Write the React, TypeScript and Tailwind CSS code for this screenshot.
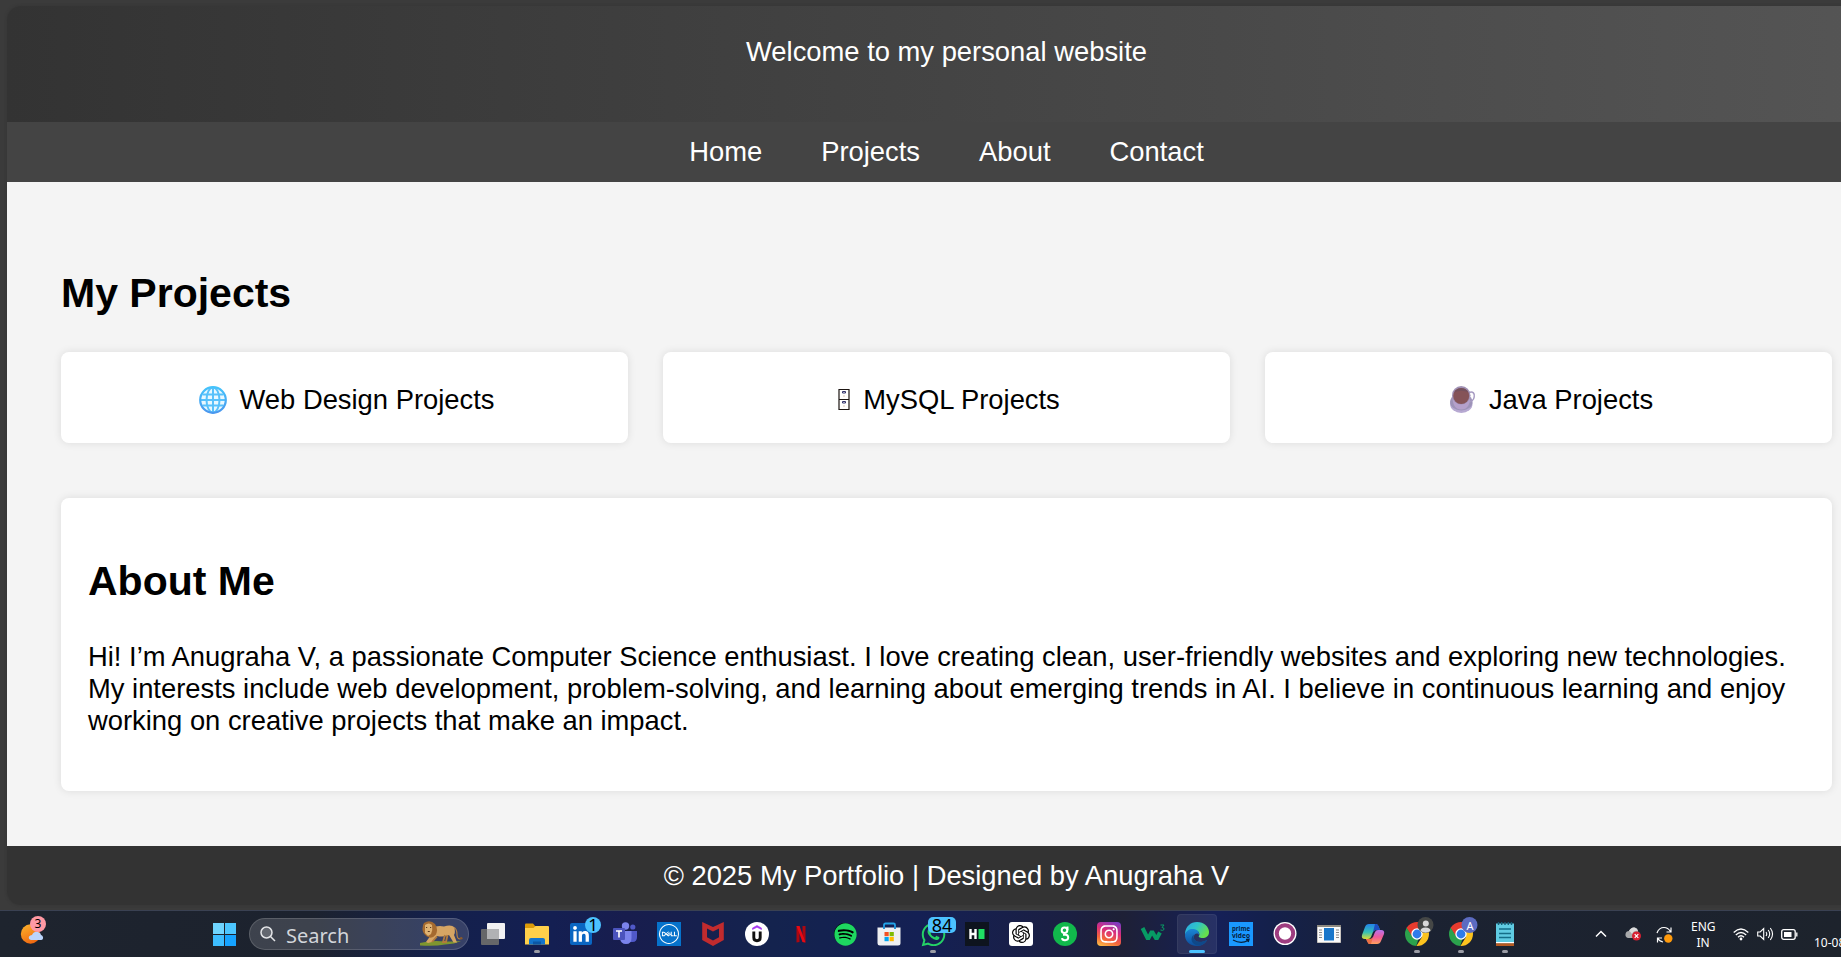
import type { ReactNode } from "react";
import { FaLinkedinIn, FaSpotify, FaWhatsapp, FaInstagram } from "react-icons/fa6";
import { SiDell, SiOpenai } from "react-icons/si";

function Globe() {
  return (
    <svg viewBox="0 0 28 28" className="h-7 w-7" fill="none">
      <defs>
        <linearGradient id="globe" x1="0" y1="0" x2="0" y2="1">
          <stop offset="0" stopColor="#45c3fb" />
          <stop offset="1" stopColor="#4a97ee" />
        </linearGradient>
      </defs>
      <circle cx="14" cy="14" r="13" fill="#e9f8ff" />
      <g stroke="#58c1fb" strokeWidth="2">
        <ellipse cx="14" cy="14" rx="6.500" ry="12.500" />
        <path d="M14 1.500v25M1.500 14h25M3.500 8.500h21M3.500 19.500h21" />
      </g>
      <circle cx="14" cy="14" r="12.800" stroke="url(#globe)" strokeWidth="2.200" />
    </svg>
  );
}

function Cabinet() {
  return (
    <svg viewBox="0 0 12 21" className="h-[21px] w-3" fill="none">
      <path d="M1 .5h10v20H1zM1 10.500h10" stroke="#1c1512" strokeWidth="1.200" />
      <path d="M4.500 2.500v1.500h3V2.500zM4.500 12.500V14h3v-1.500z" stroke="#33356d" />
      <path d="M5.500 7h1M5.500 17h1" stroke="#b98d6b" />
    </svg>
  );
}

function Cup() {
  return (
    <svg viewBox="0 0 26 27" className="h-[27px] w-[26px]" fill="none">
      <ellipse cx="11.300" cy="18" rx="11.200" ry="9" fill="#b7a9d2" />
      <ellipse cx="11.300" cy="16" rx="11.200" ry="8.500" fill="#9d93b8" />
      <path d="M19 6.500c4-1.500 6 1 5.200 4.500-.5 3-2.500 4.500-5.500 5" stroke="#a79bc2" strokeWidth="1.500" />
      <path d="M2.300 9c0 10 3 14.500 9 14.500s9-4.500 9-14.500z" fill="#b5a0cb" />
      <circle cx="11.200" cy="9.300" r="9.200" fill="#a091b4" />
      <circle cx="11.200" cy="10" r="8" fill="#855358" />
      <path d="M4 6.500a8.200 8.200 0 0 1 14.500 0q-7.200-3.500-14.500 0" fill="#74505c" />
    </svg>
  );
}

function Lion() {
  return (
    <svg viewBox="0 0 44 26" className="h-[26px] w-11" fill="none">
      <path d="M1 22q12-3 25-1.500 10 0 16-.5-6 3-16 3.500-10 2-25 1z" fill="#7f962f" />
      <path d="M34 6q4 1 4 8 .5 5 4 3.500" stroke="#b58145" strokeWidth="1.200" />
      <circle cx="42.200" cy="17.300" r="1.300" fill="#8a5a2c" />
      <path d="M12 7q7-3 13-1.500 8-2.500 10.500 1.500 1 5-.5 7l3 7.500h-3.500l-4.500-7.500q-6 2.500-12 1l-5 6-4 1-2-1 5-7z" fill="#d6a564" />
      <path d="M18 15.500l-5 5.500M28.500 14 27 21h-3l2-7" stroke="#b27a3b" strokeWidth="1.800" />
      <path d="M5 2q6-4 11 1 3.500 5 1 10.500-4 5-9 2-5-4-4.500-8 0-3.500 1.500-5.500" fill="#a56a2f" />
      <path d="M6 4q4-3 7 0 1 5-1 9l-3 2-3-3z" fill="#e0b373" />
      <path d="M7 6.500h1.200M11 6.500h1.200M8.800 10.500h2" stroke="#5b3a20" strokeWidth="1" />
    </svg>
  );
}

function Chrome({ id, children }: { id: string; children: ReactNode }) {
  return (
    <svg viewBox="0 0 24 24" className="h-6 w-6 overflow-visible" fill="none">
      <defs>
        <clipPath id={id}>
          <circle cx="12" cy="12" r="12" />
        </clipPath>
      </defs>
      <g clipPath={`url(#${id})`}>
        <path d="M-2-2h28v12H12l-5 5L1 5z" fill="#e63b2e" />
        <path d="M1.500 5.500 7.500 15l6 2-3 9H-2V0z" fill="#2ba24c" />
        <path d="M12 7h14v20H9.500l7.500-12z" fill="#fcc31e" />
      </g>
      <circle cx="12" cy="12" r="5.700" fill="#fff" />
      <circle cx="12" cy="12" r="4.400" fill="#2e7bea" />
      {children}
    </svg>
  );
}

function Svg({ children }: { children: ReactNode }) {
  return (
    <svg viewBox="0 0 24 24" className="h-6 w-6 overflow-visible" fill="none">
      {children}
    </svg>
  );
}

type TaskbarItem = { name: string; icon: ReactNode; state?: "open" | "active"; badge?: ReactNode };

const items: TaskbarItem[] = [
  {
    name: "Task view",
    icon: (
      <Svg>
        <rect x="6" y="1" width="18" height="16" rx="1" fill="#f1f1f2" />
        <rect y="7" width="18" height="16" rx="1" fill="#666769" />
        <path d="M6 7h12v10H6z" fill="#b1b2b4" />
      </Svg>
    ),
  },
  {
    name: "Files",
    state: "open",
    icon: (
      <Svg>
        <path d="M0 2.500Q0 1.500 1 1.500h7l2.500 3V9H0z" fill="#dc9b08" />
        <path d="M0 6h8.500l2-2H23q1 0 1 1v17.500H0z" fill="#ffd04a" />
        <path d="M4 22.500V18q0-2 2-2h12q2 0 2 2v4.500z" fill="#1374cc" />
        <path d="M8 19.500h8v3H8z" fill="#0c57a5" />
      </Svg>
    ),
  },
  {
    name: "LinkedIn",
    icon: (
      <span className="flex h-[22px] w-[22px] items-center justify-center rounded-[2px] bg-[#0a66c2] pt-0.5 text-[18px] text-white">
        <FaLinkedinIn />
      </span>
    ),
    badge: (
      <span className="absolute top-[6px] left-[26px] flex h-4 w-4 items-center justify-center rounded-full bg-[#4cc2ff] text-[17px] leading-4 text-black">
        1
      </span>
    ),
  },
  {
    name: "Teams",
    icon: (
      <Svg>
        <circle cx="19.800" cy="5" r="2.600" fill="#5059c9" />
        <path d="M16 9h8v6q0 5-4.500 5H16z" fill="#5059c9" />
        <circle cx="12.500" cy="4" r="3.700" fill="#7b83eb" />
        <path d="M7 9h11.500v7q0 6-5.500 6t-6-6z" fill="#7b83eb" />
        <rect y="6" width="12" height="12" rx="1" fill="#4b53bc" />
        <path d="M3 9h6M6 9v6.500" stroke="#fff" strokeWidth="1.600" />
      </Svg>
    ),
  },
  {
    name: "Dell",
    icon: (
      <span className="flex h-6 w-6 items-center justify-center bg-[#0672cb] text-[20px] text-white">
        <SiDell />
      </span>
    ),
  },
  {
    name: "McAfee",
    icon: (
      <Svg>
        <path d="M1.200 0 12 5 22.800 0v18L12 24 1.200 18zM6 6.500v8.700l6 3.300 6-3.300V6.500l-6 3z" fill="#c12b2e" fillRule="evenodd" />
      </Svg>
    ),
  },
  {
    name: "Udemy",
    icon: (
      <Svg>
        <circle cx="12" cy="12" r="12" fill="#fff" />
        <path d="M7.500 7.500V6L12 3.500 16.500 6v1.500L12 5.300z" fill="#a435f0" stroke="#a435f0" strokeWidth=".6" />
        <path d="M8.800 9.500v6q0 3.200 3.200 3.200t3.200-3.200v-6" stroke="#111" strokeWidth="2.900" />
      </Svg>
    ),
  },
  {
    name: "Netflix",
    icon: (
      <Svg>
        <path d="M7.500 4h3v16l-3 .5zM13.500 4h3v16.500l-3-.5z" fill="#ad0710" />
        <path d="M7.500 4h3l6 16.500-3-.5z" fill="#e50914" />
      </Svg>
    ),
  },
  {
    name: "Spotify",
    icon: (
      <span className="flex h-[22px] w-[22px] items-center justify-center rounded-full bg-black text-[23px] text-[#1ed760]">
        <FaSpotify className="shrink-0" />
      </span>
    ),
  },
  {
    name: "Store",
    icon: (
      <Svg>
        <path d="M7 7V3q0-1.500 1.500-1.500h8Q18 1.500 18 3v4" stroke="#24a4e8" strokeWidth="1.800" />
        <path d="M.5 5.500h23V21q0 2.500-2.500 2.500H3Q.5 23.500.5 21z" fill="#eeeff1" />
        <path d="M7 7V4M18 7V4" stroke="#178ad0" strokeWidth="1.800" />
        <path d="M7.500 10h4.200v4.200H7.500z" fill="#f25022" />
        <path d="M12.600 10h4.200v4.200h-4.200z" fill="#7fba00" />
        <path d="M7.500 15h4.200v4.200H7.500z" fill="#00a4ef" />
        <path d="M12.600 15h4.200v4.200h-4.200z" fill="#ffb900" />
      </Svg>
    ),
  },
  {
    name: "WhatsApp",
    state: "open",
    icon: <FaWhatsapp className="text-[27px] text-[#25d366]" />,
    badge: (
      <span className="absolute top-[6px] left-[17px] flex h-4 w-7 items-center justify-center rounded-[5px] bg-[#4cc2ff] text-[18px] leading-4 text-black">
        84
      </span>
    ),
  },
  {
    name: "HackerRank",
    icon: (
      <Svg>
        <path d="M0 0h24v24H0z" fill="#0e141e" />
        <path d="M5.500 7v10M10.500 7v10M5.500 12h5" stroke="#fff" strokeWidth="2.400" />
        <path d="M13.500 7h6v10h-6z" fill="#1fdf64" />
      </Svg>
    ),
  },
  {
    name: "ChatGPT",
    icon: (
      <span className="flex h-6 w-6 items-center justify-center rounded-[3px] bg-white text-[18px] text-black">
        <SiOpenai />
      </span>
    ),
  },
  {
    name: "Courses",
    icon: (
      <Svg>
        <circle cx="12" cy="12" r="12" fill="#11b84c" />
        <circle cx="11.500" cy="8.200" r="2.800" stroke="#fff" strokeWidth="2" />
        <path d="M14.500 4.500v3.700M10 12.800h2.500q2.700.2 2.700 2.700t-3 2.700-3.200-2" stroke="#fff" strokeWidth="2" />
      </Svg>
    ),
  },
  {
    name: "Instagram",
    icon: (
      <span className="flex h-6 w-6 items-center justify-center rounded-[4px] bg-[linear-gradient(20deg,#fdc947,#f4653a_30%,#d92d7d_60%,#6b3fd0)] text-[20px] text-white">
        <FaInstagram />
      </span>
    ),
  },
  {
    name: "W3Schools",
    icon: (
      <Svg>
        <path d="M1.500 6 7 17l4-7.500L15.500 17l3.500-6.500" stroke="#079b64" strokeWidth="4" strokeLinejoin="bevel" />
        <path d="M19.500 3h3.500l-2 2.500q2.500 0 2 2-1 1.500-3.500.5" stroke="#079b64" />
      </Svg>
    ),
  },
  {
    name: "Edge",
    state: "active",
    icon: (
      <Svg>
        <defs>
          <linearGradient id="edgeTop" x1="0" y1="0" x2="1" y2=".5">
            <stop stopColor="#2ba5e7" />
            <stop offset=".5" stopColor="#2fc4c8" />
            <stop offset="1" stopColor="#66e04b" />
          </linearGradient>
          <linearGradient id="edgeLow" x1="0" y1="0" x2="0" y2="1">
            <stop stopColor="#1a86d6" />
            <stop offset="1" stopColor="#0d4d9b" />
          </linearGradient>
        </defs>
        <path d="M0 11.500C.5 4.500 5.500 0 12 0c7 0 12 4.800 12 10 0 4-3 6-6.500 6-3 0-4.500-1-3.500-2.200C15.500 12 13.500 8 9 8c-5 0-8 2.500-9 5z" fill="url(#edgeTop)" />
        <path d="M0 12.500C1 8.500 5 6.500 8.500 7c4 .5 6 3 5.500 6-1-2-4-2-5 1-1.200 5 5 8.500 13 4-2 4-6 6-10 6C4.500 24-.5 18.500 0 12.500z" fill="url(#edgeLow)" />
        <path d="M9 12.500c-2 5 3.500 10 13 5.500-2 3.500-5 5.300-8 5.500-7 0-10-7-5-11z" fill="#0f4888" />
      </Svg>
    ),
  },
  {
    name: "Prime Video",
    icon: (
      <svg viewBox="0 0 24 24" className="h-6 w-6" fill="none">
        <path d="M0 0h24v24H0z" fill="#1a98ff" />
        <text x="12" y="8.500" textAnchor="middle" textLength="18" lengthAdjust="spacingAndGlyphs" fill="#06203c" className="font-['Open_Sans',sans-serif] text-[7.5px] font-bold">
          prime
        </text>
        <text x="12" y="15.500" textAnchor="middle" textLength="18" lengthAdjust="spacingAndGlyphs" fill="#06203c" className="font-['Open_Sans',sans-serif] text-[7.5px] font-bold">
          video
        </text>
        <path d="M4 18q8 4.500 15 .5M17 17.500l3-.2-.8 2.700" stroke="#06203c" strokeWidth="1.300" />
      </svg>
    ),
  },
  {
    name: "Recorder",
    icon: (
      <Svg>
        <circle cx="12" cy="11.500" r="11.500" fill="#fff" />
        <circle cx="12" cy="11.500" r="8.200" stroke="#9e3d80" strokeWidth="4" />
      </Svg>
    ),
  },
  {
    name: "Reader",
    icon: (
      <Svg>
        <path d="M.5 3.500h23v17H.5z" fill="#fafafa" stroke="#c8c4bf" />
        <path d="M0 4h24" stroke="#8c8880" strokeWidth="2" />
        <path d="M2 8h3M2 10.500h3M2 13h3M2 15.500h3M19 8h3M19 10.500h3M19 13h3M19 15.500h3" stroke="#898989" />
        <path d="M7 6h10v12.500H7z" fill="#1976ca" />
      </Svg>
    ),
  },
  {
    name: "Copilot",
    icon: (
      <Svg>
        <defs>
          <linearGradient id="copA" x1="0" y1="0" x2="0" y2="1">
            <stop stopColor="#2383ea" />
            <stop offset=".55" stopColor="#35bfb5" />
            <stop offset="1" stopColor="#dcdb35" />
          </linearGradient>
          <linearGradient id="copB" x1="0" y1="0" x2="0" y2="1">
            <stop stopColor="#b573ee" />
            <stop offset=".5" stopColor="#ef5a99" />
            <stop offset="1" stopColor="#ffa05c" />
          </linearGradient>
        </defs>
        <path d="M8 2h7q2 0 2.700 2.500L19 8h-4q-2 0-3 2l-2 5q-1 2-3 2H4q-4 0-3-4l3-8q1-3 4-3z" fill="url(#copA)" />
        <path d="M14 2h1q2 0 2.700 2.500L19 8h-4q-2 0-3 2z" fill="#1c4dc1" />
        <path d="M16 22H9q-2 0-2.700-2.500L5 17h4q2 0 3-2l2-5q1-2 3-2h3q4 0 3 4l-3 7q-1 3-4 3z" fill="url(#copB)" />
        <path d="M10 22H9q-2 0-2.700-2.500L5 17h4q2 0 3-2z" fill="#ec7044" />
      </Svg>
    ),
  },
  {
    name: "Chrome guest",
    state: "open",
    icon: (
      <Chrome id="chromeGuest">
        <circle cx="20.500" cy="3" r="8" fill="#454746" />
        <circle cx="20.800" cy="1.500" r="3" fill="#dadada" />
        <path d="M15.500 9q0-3.500 5-3.500t5 3.500q-5 3.500-10 0" fill="#dadada" />
      </Chrome>
    ),
  },
  {
    name: "Chrome profile",
    state: "open",
    icon: (
      <Chrome id="chromeProfile">
        <circle cx="20.500" cy="3" r="8" fill="#5c6bc0" />
      </Chrome>
    ),
    badge: (
      <span className="absolute top-[7px] left-[23px] w-4 text-center text-[11px] leading-4 text-white">A</span>
    ),
  },
  {
    name: "Notepad",
    state: "open",
    icon: (
      <Svg>
        <path d="M3 1.500h18v20H3z" fill="#5fcbe2" />
        <path d="M3 20h18v1.500H3z" fill="#fff" />
        <path d="M3 21.300h18V24H3z" fill="#b65a22" />
        <path d="M5.500 0v3M8.700 0v3M12 0v3M15.300 0v3M18.500 0v3" stroke="#155d75" strokeWidth="1.400" />
        <path d="M6 7h12M6 11.500h12M6 15.500h12" stroke="#146e88" strokeWidth="1.600" />
      </Svg>
    ),
  },
];

function TaskbarButton({ item }: { item: TaskbarItem }) {
  const active = item.state === "active";
  return (
    <div className="relative flex h-full items-center justify-center">
      {active && <span className="absolute top-[3px] left-0.5 h-10 w-10 rounded-[4px] border border-white/5 bg-white/8" />}
      <span className="relative">{item.icon}</span>
      {item.badge}
      {item.state && (
        <span
          className={
            active
              ? "absolute bottom-1 left-[14px] h-[3px] w-4 rounded-full bg-[#4cc2ff]"
              : "absolute bottom-1 left-[19px] h-[3px] w-1.5 rounded-full bg-[#9a9ca5]"
          }
        />
      )}
    </div>
  );
}

function Taskbar() {
  return (
    <footer className="flex h-[47px] shrink-0 items-center border-t border-[#3a4152] bg-[linear-gradient(90deg,#1e242e_0%,#1c222e_17%,#14204c_24%,#141f52_30%,#181d4e_34%,#14234e_42%,#142054_50%,#1b1f42_58%,#1e2036_61%,#152058_66%,#14204b_69%,#1b2232_76%,#1d232c_100%)] font-['Noto_Sans',sans-serif] text-white">
      <div className="relative ml-[21px] h-7 w-[192px]">
        <svg viewBox="0 0 28 28" className="h-7 w-7 overflow-visible" fill="none">
          <defs>
            <linearGradient id="sun" x1="0" y1="0" x2=".5" y2="1">
              <stop stopColor="#fcb52c" />
              <stop offset="1" stopColor="#f06a12" />
            </linearGradient>
          </defs>
          <circle cx="9.500" cy="14" r="9.700" fill="url(#sun)" />
          <path d="M10 20q-3-1-2-3.500 1-1.500 3-1.500 2-4 6-3 3 1 3 3 2.500 1 2 3.500-.5 1.500-2 1.500z" fill="#bcd5fb" />
        </svg>
        <span className="absolute -top-1 left-[9px] h-4 w-4 rounded-full bg-[#ff99a4] text-center text-[12px] leading-4 text-black">3</span>
      </div>
      <div className="grid h-[23px] w-[23px] grid-cols-2 gap-px">
        <span className="bg-[#6fd5ff]" />
        <span className="bg-[#4cc6ff]" />
        <span className="bg-[#3dbdff]" />
        <span className="bg-[#16a3ff]" />
      </div>
      <div className="ml-[13px] flex h-8 w-[220px] items-center rounded-full border border-white/15 bg-white/15 pr-[5px] pl-2.5 text-[20px] text-[#d2d5da]">
        <svg viewBox="0 0 16 16" className="h-4 w-4" fill="none" stroke="#e4e5e8" strokeWidth="1.500">
          <circle cx="6.500" cy="6.500" r="5.500" fill="#ffffff33" />
          <path d="m10.500 10.500 4.500 4.500" />
        </svg>
        <span className="mt-1 ml-2.5 grow leading-7">Search</span>
        <Lion />
      </div>
      <div className="ml-0.5 grid h-full grid-cols-[repeat(24,44px)]">
        {items.map((item) => (
          <TaskbarButton key={item.name} item={item} />
        ))}
      </div>
      <div className="ml-[68px] flex w-[246px] shrink-0 items-center">
        <svg viewBox="0 0 12 8" className="h-2 w-3 shrink-0" fill="none" stroke="#fff" strokeWidth="1.500">
          <path d="m1 6.500 5-5 5 5" />
        </svg>
        <svg viewBox="0 0 17 14" className="ml-[18px] h-3.5 w-[17px] shrink-0" fill="none">
          <path d="M3 11q-3-1-2.500-4Q1 4 4 4q2-4 5.500-3.500Q13 1 13 4.500q2 1 2 4l-3 2.500z" fill="#a8a9ab" />
          <path d="M4 4q2-4 5.500-3.500Q12 1 13 4 9 3 7 7 5 4 4 4" fill="#dcdcdd" />
          <circle cx="11.500" cy="9" r="4.500" fill="#d81f32" />
          <path d="m9.700 7.200 3.600 3.600m0-3.600-3.600 3.600" stroke="#fff" strokeWidth="1.200" />
        </svg>
        <svg viewBox="0 0 17 17" className="ml-3.5 h-[17px] w-[17px] shrink-0" fill="none" stroke="#fff" strokeWidth="1.200">
          <path d="M1 7Q3 1.500 8 1.500q4 0 6.500 4M15 1.500v4.500h-4.500M6 12H1.500v4.500M1.500 12q2 3.500 5.500 4" />
          <circle cx="12.300" cy="12.500" r="4.200" fill="#ff9a0c" stroke="none" />
        </svg>
        <span className="mt-0.5 ml-[18px] w-6 shrink-0 text-center text-[12px] leading-4">
          ENG
          <br />
          IN
        </span>
        <svg viewBox="0 0 16 13" className="ml-[18px] h-[13px] w-4 shrink-0" fill="none" stroke="#fff" strokeWidth="1.300">
          <path d="M.7 4.500q7.300-7 14.600 0M2.800 7q5.200-5 10.400 0M5 9.300q3-3 6 0" />
          <circle cx="8" cy="11" r="1.400" fill="#fff" stroke="none" />
        </svg>
        <svg viewBox="0 0 17 14" className="ml-2 h-3.5 w-[17px] shrink-0" fill="none" stroke="#fff" strokeWidth="1.100">
          <path d="M.7 5h2.500l3.500-3.500v11L3.200 9H.7zM9 5q1.500 2 0 4M11.200 3q3 4 0 8M13.300 1q4.500 6 0 12" />
        </svg>
        <svg viewBox="0 0 17 11" className="ml-[7px] h-[11px] w-[17px] shrink-0" fill="none" stroke="#fff" strokeWidth="1.300">
          <rect x=".7" y=".7" width="13.500" height="9.600" rx="2" />
          <path d="M3 3h7.500v5H3z" fill="#fff" stroke="none" />
          <path d="M15.800 3.500v4" />
        </svg>
        <span className="mt-[17px] ml-4 shrink-0 text-[12px] leading-4">10-08</span>
      </div>
    </footer>
  );
}

const projects = [
  { title: "Web Design Projects", icon: <Globe />, iconBox: "-mt-px flex w-[45px] pl-[4px]" },
  { title: "MySQL Projects", icon: <Cabinet />, iconBox: "-mt-px flex w-[30px] pl-[5px]" },
  { title: "Java Projects", icon: <Cup />, iconBox: "-mt-px flex w-[45px] pl-[6px]" },
];

export default function App() {
  return (
    <div className="flex h-[957px] w-full flex-col overflow-hidden bg-[#3b3b3b] font-['Liberation_Sans',Arial,sans-serif] text-[27.36px] leading-8 text-black">
      <div className="mt-1.5 mb-[5px] ml-[7px] flex w-[1879px] grow flex-col overflow-hidden rounded-[14px] shadow-[0_0_3px_#333]">
        <header className="h-[116px] bg-[linear-gradient(90deg,#333,#555)] pt-[30px] text-center text-white">
          <p>Welcome to my personal website</p>
        </header>
        <nav className="flex h-[60px] items-center justify-center gap-[59px] bg-[#444] text-white">
          <a>Home</a>
          <a>Projects</a>
          <a>About</a>
          <a>Contact</a>
        </nav>
        <main className="h-[664px] bg-[#f4f4f4] px-[54px] pt-[88px]">
          <h2 className="text-[41px] leading-[47px] font-bold">My Projects</h2>
          <section className="mt-[35px] grid grid-cols-3 gap-[35px]">
            {projects.map((project) => (
              <article key={project.title} className="flex h-[91px] items-center justify-center rounded-lg bg-white pt-[5px] shadow-[0_0_9px_rgba(0,0,0,0.1)]">
                <span className={project.iconBox}>{project.icon}</span>
                {project.title}
              </article>
            ))}
          </section>
          <section className="mt-[55px] h-[293px] rounded-lg bg-white px-[27px] pt-[60px] shadow-[0_0_9px_rgba(0,0,0,0.1)]">
            <h2 className="text-[41px] leading-[47px] font-bold">About Me</h2>
            <p className="mt-9">
              Hi! I’m Anugraha V, a passionate Computer Science enthusiast. I love creating clean, user-friendly websites and exploring new technologies. My interests include web development, problem-solving, and learning about emerging trends in AI. I believe in continuous learning and enjoy working on creative projects that make an impact.
            </p>
          </section>
        </main>
        <div className="grow bg-[#333] pt-3.5 text-center text-white">© 2025 My Portfolio | Designed by Anugraha V</div>
      </div>
      <Taskbar />
    </div>
  );
}
